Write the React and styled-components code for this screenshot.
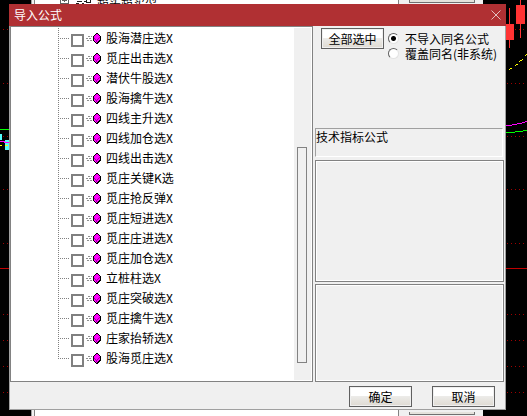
import React, { useState } from "react";
import styled, { createGlobalStyle } from "styled-components";

const GlobalStyle = createGlobalStyle`
  * {
    box-sizing: border-box;
  }

  body {
    margin: 0;
    background: #000;
    color: #000;
    font: 12px/16px "Noto Sans CJK SC", "Liberation Sans", sans-serif;
    overflow: hidden;
  }
`;

const Desktop = styled.div`
  position: relative;
  display: flex;
  min-height: 100vh;
  padding: 4px 21px 6px 9px;
`;

const Chart = styled.svg`
  position: absolute;
  top: 0;
  width: 30px;
  height: 416px;
  ${({ $side }) => ($side === "left" ? "left: 0;" : "right: 0;")}
`;

const BackWindow = styled.div`
  position: absolute;
  top: 0;
  bottom: 0;
  left: 31px;
  right: 44px;
  display: flex;
  padding-left: 2px;
  background: #f0f0f0;
  border-left: 1px solid #a0a0a0;
`;

const BackTree = styled.div`
  flex: 1;
  display: flex;
  align-items: flex-start;
  height: 100%;
  padding-left: 24px;
  background: #fff;
  border: solid #828282;
  border-width: 0 1px;
`;

const BackLabel = styled.span`
  margin: -6px 0 0 4px;
`;

const BackColumn = styled.div`
  display: flex;
  flex-direction: column;
  justify-content: space-between;
  width: 84px;
  padding: 0 8px 1px 10px;
`;

const BackEdge = styled.div`
  height: 3px;
  border: 1px solid #707070;
  border-top: 0;
  background: #e4e2dc;
`;

const Dialog = styled.section`
  position: relative;
  flex: 1;
  display: flex;
  flex-direction: column;
  background: #f0f0f0;
  border: solid #a0a0a0;
  border-width: 0 1px 1px;
`;

const TitleBar = styled.header`
  display: flex;
  align-items: center;
  justify-content: space-between;
  height: 22px;
  margin: 0 -1px;
  padding: 0 5px;
  background: #b03033;
  color: #fff;
`;

const Title = styled.h1`
  margin: 0;
  font-size: 12px;
  font-weight: 400;
`;

const CloseButton = styled.button`
  display: flex;
  padding: 0;
  border: 0;
  background: none;
`;

const Body = styled.div`
  flex: 1;
  display: grid;
  grid-template-columns: 303fr 189fr;
  gap: 2px;
  padding-right: 1px;
`;

const TreePanel = styled.div`
  display: flex;
  border: 1px solid #828282;
  background: #fff;
  padding: 1px;
`;

const Tree = styled.ul`
  flex: 1;
  margin: 0;
  padding: 0 0 0 44px;
  list-style: none;
`;

const TreeRow = styled.li`
  height: 20px;
`;

const RowLabel = styled.label`
  display: flex;
  height: 20px;
  line-height: 20px;
  white-space: nowrap;
`;

const CheckBox = styled.input`
  appearance: none;
  flex: none;
  width: 13px;
  height: 13px;
  margin: 6px 2px 0 0;
  border: 2px solid #808080;
  background: #fff;

  &:checked {
    box-shadow: inset 0 0 0 2px #fff;
    background: #404040;
  }
`;

const RowText = styled.span`
  margin-left: 4px;
`;

const ScrollTrack = styled.div`
  width: 17px;
  padding: 119px 4px 17px 3px;
  background: #f0f0f0;
`;

const ScrollThumb = styled.div`
  height: 100%;
  border: 1px solid #828282;
`;

const SidePanel = styled.div`
  display: flex;
  flex-direction: column;
`;

const Options = styled.div`
  display: flex;
  align-items: flex-start;
  gap: 4px;
  height: 102px;
  padding: 2px 0 0 6px;
`;

const PushButton = styled.button`
  width: 63px;
  height: 21px;
  padding: 0;
  border: 1px solid #606060;
  background: linear-gradient(#fff 45%, #ecebe8 50%, #dedad2);
  box-shadow: inset 0 0 0 1px #f0f0f0;
  color: #000;
  font: inherit;
  line-height: 18px;
  white-space: nowrap;
`;

const RadioList = styled.div`
  padding-top: 3px;
`;

const RadioLabel = styled.label`
  display: flex;
  align-items: center;
  gap: 6px;
  height: 15px;
  line-height: 15px;
  white-space: nowrap;
`;

const Radio = styled.input`
  appearance: none;
  flex: none;
  width: 11px;
  height: 11px;
  margin: 0;
  border: 1px solid;
  border-color: #606060 #e3e3e3 #e3e3e3 #606060;
  border-radius: 50%;
  background: #fff;

  &:checked {
    background: radial-gradient(circle, #000 2px, #fff 3px);
  }
`;

const Caption = styled.div`
  height: 29px;
  margin-right: 1px;
  border: 1px solid;
  border-color: #a0a0a0 #fff #fff #a0a0a0;
`;

const InfoBox = styled.div`
  flex: ${({ $grow }) => $grow};
  margin-top: ${({ $gap }) => $gap}px;
  border: 1px solid #828282;
  box-shadow: inset 0 0 0 1px #fff;
`;

const Footer = styled.footer`
  display: flex;
  justify-content: flex-end;
  gap: 20px;
  padding: 4px 10px 2px;
`;

const FORMULAS = [
  "股海潜庄选X",
  "觅庄出击选X",
  "潜伏牛股选X",
  "股海擒牛选X",
  "四线主升选X",
  "四线加仓选X",
  "四线出击选X",
  "觅庄关键K选",
  "觅庄抢反弹X",
  "觅庄短进选X",
  "觅庄庄进选X",
  "觅庄加仓选X",
  "立桩柱选X",
  "觅庄突破选X",
  "觅庄擒牛选X",
  "庄家抬轿选X",
  "股海觅庄选X"
];

const Branch = ({ last }) => (
  <svg width="15" height="20" shapeRendering="crispEdges" aria-hidden="true">
    <path
      d={last ? "M2.5 0V11M4 10.5H13" : "M2.5 0V20M4 10.5H13"}
      stroke="#808080"
      strokeDasharray="1 1"
      fill="none"
    />
  </svg>
);

const FormulaIcon = () => (
  <svg width="16" height="20" shapeRendering="crispEdges" aria-hidden="true">
    <path
      d="M2 8.5h4M0 10.5h6M1 12.5h5"
      stroke="#909090"
      strokeDasharray="2 1"
    />
    <path
      d="M10 5h2v1h1v1h1v1h1v5h-1v1h-1v1h-1v1h-2v-1H9v-1H8v-1H7V8h1V7h1V6h1z"
      fill="#000"
    />
    <path
      d="M10 6h2v1h1v1h1v4h-1v1h-1v1h-1v1h-1v-1H9v-1H8V8h1V7h1z"
      fill="#f0f"
    />
    <path
      d="M8 10h1v1h1v1h1v-1h1v-1h1v-1h1v1h-1v1h-1v1h-1v2h-1v-2H9v-1H8z"
      fill="#a000a0"
    />
  </svg>
);

const LeftChart = () => (
  <Chart $side="left" shapeRendering="crispEdges" aria-hidden="true">
    <path d="M0 129.5h9" stroke="#0f0" />
    <path d="M0 134h2v6H0zM5 140h4v10H5z" fill="#54fcfc" />
    <path d="M0 141.5h4v1h5" stroke="#f0f" fill="none" />
    <path d="M0 145.5h2M5 145.5h3" stroke="#ff0" />
    <path d="M0 268.5h9" stroke="#c00000" />
    <path
      d="M3 29.5h6M3 83.5h6M3 136.5h6M3 189.5h6M3 243.5h6M3 314.5h6M3 340.5h6M3 366.5h6M3 392.5h6"
      stroke="#a00000"
      strokeDasharray="1 3"
    />
  </Chart>
);

const RightChart = () => (
  <Chart $side="right" shapeRendering="crispEdges" aria-hidden="true">
    <path
      d="M10 29.5h18M10 83.5h18M10 136.5h18M10 189.5h18M10 243.5h18M10 314.5h18M10 340.5h18M10 366.5h18M10 392.5h18"
      stroke="#a00000"
      strokeDasharray="1 3"
    />
    <path d="M12.5 8v40M23.5 0v38" stroke="#f33" />
    <path d="M8 24h9v16H8zM19 5h9v19h-9z" fill="#f33" />
    <path
      d="M12 69.5h1M13 68.5h2M18 65.5h1M19 64.5h2M22 61.5h1M23 60.5h2M25 59.5h1M28 55.5h1M29 54.5h1"
      stroke="#ff0"
    />
    <path
      d="M9 125.5h6M15 124.5h5M20 123.5h5M25 122.5h3M28 121.5h2"
      stroke="#f0f"
    />
    <path d="M9 132.5h9M18 131.5h8M26 130.5h4" stroke="#0f0" />
    <path d="M9 268.5h21" stroke="#c00000" />
  </Chart>
);

const App = () => {
  const [checked, setChecked] = useState([]);
  const [mode, setMode] = useState("skip");

  const toggle = name =>
    setChecked(
      checked.includes(name)
        ? checked.filter(item => item !== name)
        : [...checked, name]
    );

  return (
    <>
      <GlobalStyle />
      <Desktop>
        <LeftChart />
        <RightChart />
        <BackWindow>
          <BackTree>
            <svg
              width="34"
              height="4"
              shapeRendering="crispEdges"
              aria-hidden="true"
            >
              <path
                d="M1.5 0v3.5h8V0M3 .5h5M5.5 0v2"
                stroke="#606060"
                fill="none"
              />
              <path
                d="M17 3.5h3M18 1.500h5M23 3.500h2M25 1.5h2M27.5 0v2.500h4V0"
                stroke="#202020"
                fill="none"
              />
            </svg>
            <BackLabel>超买超卖型</BackLabel>
          </BackTree>
          <BackColumn>
            <BackEdge />
            <BackEdge />
          </BackColumn>
        </BackWindow>
        <Dialog>
          <TitleBar>
            <Title>导入公式</Title>
            <CloseButton aria-label="关闭">
              <svg width="10" height="10">
                <path d="M.5.5l9 9M9.5.5l-9 9" stroke="#e4c0c0" />
              </svg>
            </CloseButton>
          </TitleBar>
          <Body>
            <TreePanel>
              <Tree>
                {FORMULAS.map((name, i) => (
                  <TreeRow key={name}>
                    <RowLabel>
                      <Branch last={i === FORMULAS.length - 1} />
                      <CheckBox
                        type="checkbox"
                        checked={checked.includes(name)}
                        onChange={() => toggle(name)}
                      />
                      <FormulaIcon />
                      <RowText>{name}</RowText>
                    </RowLabel>
                  </TreeRow>
                ))}
              </Tree>
              <ScrollTrack>
                <ScrollThumb />
              </ScrollTrack>
            </TreePanel>
            <SidePanel>
              <Options>
                <PushButton onClick={() => setChecked(FORMULAS)}>
                  全部选中
                </PushButton>
                <RadioList>
                  <RadioLabel>
                    <Radio
                      type="radio"
                      name="mode"
                      checked={mode === "skip"}
                      onChange={() => setMode("skip")}
                    />
                    不导入同名公式
                  </RadioLabel>
                  <RadioLabel>
                    <Radio
                      type="radio"
                      name="mode"
                      checked={mode === "overwrite"}
                      onChange={() => setMode("overwrite")}
                    />
                    覆盖同名(非系统)
                  </RadioLabel>
                </RadioList>
              </Options>
              <Caption>技术指标公式</Caption>
              <InfoBox $grow={122} $gap={3} />
              <InfoBox $grow={98} $gap={2} />
            </SidePanel>
          </Body>
          <Footer>
            <PushButton>确定</PushButton>
            <PushButton>取消</PushButton>
          </Footer>
        </Dialog>
      </Desktop>
    </>
  );
};

export default App;
